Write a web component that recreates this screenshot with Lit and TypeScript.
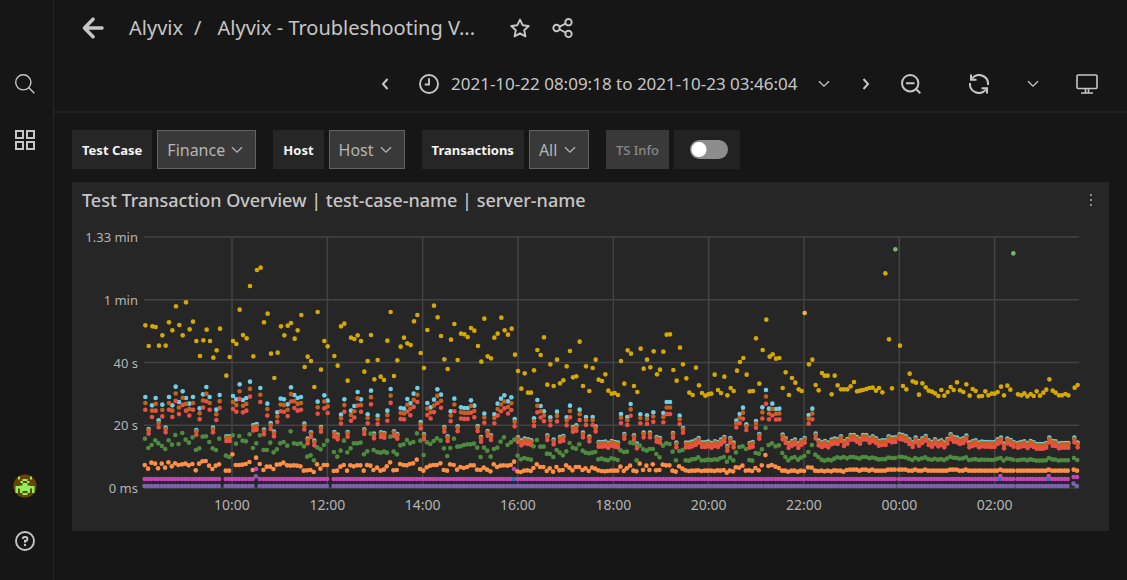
import { LitElement, html, svg, css } from "lit";
import { customElement, property } from "lit/decorators.js";

// Chart samples are kept as recorded blocks. Each block has its own origin, and
// all coordinates are in thirds of a plot pixel, with y growing downwards.
const UNIT = 3;
const PLOT_LEFT = 144;
const PLOT_WIDTH = 935;
const PLOT_BASE = 1463;
const PLOT_HEIGHT = 251;

interface Point { x: number; h: number; }
interface Dot extends Point { color: string; }

const nums = (s: string) => s.trim().split(/\s+/).map(Number);
const toX = (ox: number, x: number) => (ox * UNIT + x) / UNIT - PLOT_LEFT;
const toH = (oy: number, y: number) => PLOT_BASE - (oy * UNIT + y);

const TOTALS: [number, number, string][] = [
  [70, 220, `226 315 236 377 247 318 257 320 267 376 277 345 287 376 297 306 307 330 318 258 328 314 338 345
    348 246 359 327 369 304 379 362 390 407 400 360 410 328 420 362 430 412 440 390 450 325 469 466 479 410
    489 362 499 371 509 268 519 344 530 354 540 197 550 408 561 149 572 142 582 306 593 280 603 400 613 473
    623 397 633 318 643 345 653 316 663 308 674 355 683 330 694 284 704 440 713 409 723 422 733 500 743 275
    753 448 763 362 773 378`],
  [330, 280, `13 227 23 256 33 138 43 130 53 301 63 172 73 176 83 165 93 182 103 274 113 242 123 164 133 297
    143 239 152 289 162 299 172 181 182 95 192 287 202 240 212 199 222 172 232 189 242 194 252 123 262 104
    272 218 282 263 292 149 312 76 323 111 333 167 343 237 353 266 363 178 373 131 383 239 393 160 403 162
    413 170 423 143 433 151 444 197 454 244 463 115 473 228 483 234 493 172 503 160 514 112 524 150 534 163
    545 145 555 223 564 272 574 325 584 279 594 337 603 337 612 270 622 209 632 224 642 171 652 313 661 252
    671 317 681 238 690 309 700 300 710 258 720 212 729 291 739 288 749 184 759 317 768 258 778 332 788 263
    797 238`],
  [590, 280, `26 298 36 302 46 282 55 331 65 340 74 338 84 344 93 242 103 310 113 210 123 220 132 317 142 335
    152 205 161 265 171 238 181 261 191 213 201 282 210 268 220 214 230 163 240 162 250 269 260 301 270 202
    279 252 289 294 298 337 308 344 318 262 327 315 336 338 346 346 355 342 364 340 374 283 384 329 393 338
    403 289 412 345 422 323 431 332 441 271 450 245 460 233 470 283 479 333 489 332 498 174 508 310 518 209
    529 118 539 229 548 222 558 235 568 233 578 323 587 276 597 344 606 293 616 307 626 327 635 332 657 252
    667 238 677 314 686 330 696 278 704 286 713 286 725 342 734 286 743 315 753 327 762 327 772 327`],
  [850, 230, `2 468 12 455 21 483 30 481 39 479 49 476 58 473 68 472 78 481 87 473 97 486 106 129 117 327
    126 474 150 346 159 467 169 477 179 430 188 453 198 457 207 493 217 459 227 471 236 481 246 484 255 489
    265 497 274 479 283 496 293 485 302 470 311 479 321 456 330 480 340 485 349 462 359 496 368 476 377 482
    387 498 396 497 406 483 415 495 425 490 434 490 443 485 453 469 462 495 472 466 481 478 504 492 514 495
    523 489 532 498 542 491 551 497 560 483 570 496 580 487 589 478 598 447 608 481 617 487 627 495 636 495
    646 491 655 495 674 472 683 464`],
];

// x, slowest step, middle step, fast step
const STEPS: [number, number, string][] = [
  [70, 370, `226 80 205 284 236 176 233 295 246 105 224 277 257 83 210 280 266 150 219 294 277 103 227 280
    287 172 236 292 297 80 210 276 307 105 223 288 317 49 194 279 327 95 221 284 338 63 188 282
    348 83 208 280 358 100 217 285 369 80 201 281 379 179 239 300 389 114 234 280 399 72 199 273
    409 50 198 272 419 80 215 286 429 172 234 296 439 118 239 286 449 74 205 282 469 198 256 301
    479 198 260 301 489 77 195 252 499 87 220 284 509 42 197 284 519 89 211 283 529 83 213 281
    540 34 192 275 550 164 233 299 560 161 219 262 571 53 195 281 582 178 239 299 592 100 239 289
    602 158 217 289 612 184 246 296 622 126 237 283 632 85 219 282 642 87 215 277 653 102 226 285
    663 51 183 286 673 74 219 285 683 83 221 286 693 80 219 288 703 160 228 301 713 205 259 300
    723 186 255 299 733 211 270 305 743 94 231 282 753 170 237 295 763 75 224 284 773 91 211 284`],
  [330, 280, `13 455 515 572 23 463 529 571 33 403 511 559 43 357 481 554 53 455 516 571 63 391 504 555
    73 377 489 558 83 335 489 555 93 357 487 555 103 447 522 571 113 402 513 554 123 331 460 556
    132 460 509 569 143 406 515 562 153 456 517 571 163 458 514 568 172 391 517 558 182 326 469 546
    192 453 514 570 202 461 522 569 212 383 495 551 222 385 492 554 232 356 479 555 241 369 489 551
    251 340 485 549 262 323 459 538 272 425 481 566 282 462 524 571 292 368 486 561 302 381 491 556
    312 358 482 554 322 327 474 554 333 343 481 549 343 440 504 569 353 468 527 571 362 393 503 552
    373 355 475 554 383 438 499 568 393 381 498 560 403 383 494 563 413 383 492 560 423 360 492 555
    433 376 490 555 443 437 502 568 453 470 530 569 463 400 502 562 473 452 511 568 483 465 529 573
    493 402 506 552 503 370 502 560 513 355 484 556 523 345 471 555 534 363 494 556 544 351 486 554
    554 416 478 544 564 471 526 573 574 481 537 575 584 475 533 571 594 477 536 570 604 480 538 572
    612 414 498 563 622 359 479 552 632 377 499 560 642 393 499 560 652 465 520 572 661 411 521 564
    671 478 530 574 681 394 509 560 690 470 517 570 700 467 525 569 710 411 513 555 720 376 488 562
    729 440 502 570 739 435 505 560 749 388 492 560 759 457 511 569 768 410 517 564 778 469 519 572
    788 410 517 562 797 439 515 565`],
  [590, 280, `26 485 537 570 36 485 535 572 46 484 538 573 55 488 540 572 65 482 534 571 75 485 536 571
    84 487 539 571 93 401 510 559 103 461 515 572 112 410 514 564 122 371 487 556 132 465 489 571
    141 490 540 573 151 402 496 550 161 457 507 569 171 405 511 556 180 457 506 569 190 396 506 552
    200 470 521 570 210 473 531 569 220 398 496 553 230 365 489 555 240 365 491 555 249 458 514 571
    259 487 540 574 269 406 512 558 279 443 509 565 288 487 540 570 298 487 541 572 307 484 537 571
    317 480 536 571 326 473 531 570 336 486 540 572 346 486 540 571 355 484 538 571 365 488 539 571
    375 483 537 572 384 486 538 570 393 478 533 571 403 470 530 569 412 497 544 577 421 473 532 571
    431 487 540 573 439 421 516 561 449 401 500 562 459 382 498 556 469 432 506 571 479 488 539 570
    488 485 541 572 498 422 518 563 508 461 520 570 517 381 507 555 528 329 443 524 537 385 494 557
    547 370 489 554 558 386 498 559 568 385 495 563 578 463 518 571 587 474 530 571 596 489 540 574
    606 482 533 571 615 478 530 571 625 489 538 574 634 480 532 571 644 473 527 572 656 404 515 561
    667 385 494 562 677 460 523 571 686 481 530 572 696 486 538 571 705 482 541 573 715 487 538 571
    725 478 540 573 734 475 535 570 743 477 531 571 753 468 533 571 762 483 530 574 772 476 534 569`],
];

// x and slowest step only; the other steps follow it closely after midnight
const QUIET = `2 614 12 614 21 620 30 626 39 614 49 614 59 623 68 618 78 624 87 632 97 630 107 630 116 618
  126 622 136 621 149 612 158 614 168 618 178 627 188 636 197 622 207 632 217 624 227 617 236 630 246 635
  255 627 265 634 274 630 283 637 292 626 302 612 311 620 321 622 330 627 340 624 349 616 358 637 368 633
  377 630 387 637 396 634 406 635 415 635 425 636 434 635 443 627 453 622 462 640 472 625 482 629 491 635
  504 638 513 635 523 633 533 639 542 632 551 636 560 641 570 641 579 641 589 638 598 622 608 632 617 633
  627 640 636 638 646 638 655 638 673 622 683 637`;

const C = {
  yellow: "#d6a800", cyan: "#6ed0e8", rust: "#c4611a", red: "#ea5045",
  green: "#4f8b3f", orange: "#ff8f45", magenta: "#c345b4", purple: "#7a62ae",
  blue: "#1f78c1", lime: "#7eb26d", amber: "#eab839",
};

function buildDots(): Dot[] {
  const back: Dot[] = [];
  const cyan: Dot[] = [], rust: Dot[] = [], red: Dot[] = [];
  const green: Dot[] = [], orange: Dot[] = [], low: Dot[] = [];

  const add = (x: number, hc: number, hg: number, ho: number) => {
    const rise = Math.max(0, Math.min(1, (hc - 182) / 65));
    const extra = Math.max(0, hc - 249) * 0.1;
    cyan.push({ x, h: hc, color: C.cyan });
    rust.push({ x, h: hc - 4 - 12 * rise - extra * 0.8, color: C.rust });
    red.push({ x, h: hc - 14 - 21 * rise - extra * 1.4, color: C.red });
    green.push({ x: x - 0.4, h: hg, color: C.green });
    orange.push({ x: x - 0.6, h: ho, color: C.orange });
    const spike = (ho > 88 && Math.abs(x - 112) < 2) || Math.abs(x - 370.7) < 1;
    const late = Math.abs(x - 856.7) < 1.5 || Math.abs(x - 905) < 1;
    if (Math.abs(x - 370.7) < 1 || late) low.push({ x: x - 0.6, h: 27, color: C.blue });
    low.push({ x: x - 0.6, h: spike ? 57 : late ? 36 : x > 928 ? 33 : 27, color: C.magenta });
    low.push({ x: x - 0.8, h: spike && x < 200 ? 35 : x > 928 && x < 931 ? 13 : 6, color: C.purple });
  };

  for (const [ox, oy, text] of TOTALS) {
    const n = nums(text);
    for (let i = 0; i < n.length; i += 2) back.push({ x: toX(ox, n[i]), h: toH(oy, n[i + 1]), color: C.yellow });
  }
  back.push({ x: toX(590, 644), h: toH(280, 98), color: C.amber });
  back.push({ x: toX(850, 136), h: toH(230, 57), color: C.lime });
  back.push({ x: toX(850, 490), h: toH(230, 69), color: C.lime });

  for (const [ox, oy, text] of STEPS) {
    const n = nums(text);
    for (let i = 0; i < n.length; i += 4) {
      add(toX(ox, n[i]), toH(oy, n[i + 1]), toH(oy, n[i + 2]), toH(oy, n[i + 3]));
    }
  }
  const q = nums(QUIET);
  for (let i = 0; i < q.length; i += 2) {
    const h = toH(230, q[i + 1]);
    add(toX(850, q[i]), h, 93 - (159 - h) * 0.4, h > 150 ? 55 : 52);
  }
  return [...back, ...cyan, ...rust, ...red, ...green, ...orange, ...low];
}

const DOTS = buildDots();
const TIMES = ["10:00", "12:00", "14:00", "16:00", "18:00", "20:00", "22:00", "00:00", "02:00"];
const LEVELS = ["1.33 min", "1 min", "40 s", "20 s", "0 ms"];
const pct = (x: number) => `${((x / PLOT_WIDTH) * 100).toFixed(3)}%`;

@customElement("transaction-chart")
export class TransactionChart extends LitElement {
  static styles = css`
    :host { display: grid; grid-template-columns: 66px 1fr; column-gap: 6px; padding-right: 30px; color: #b4b4b4; font-size: 13px; line-height: 16px; }
    .levels { display: flex; flex-direction: column; justify-content: space-between; text-align: right; margin: -8px 0; height: 267px; white-space: nowrap; }
    .plot { display: block; width: 100%; height: 251px; overflow: visible; }
    .times { grid-column: 2; display: block; width: 100%; height: 34px; overflow: visible; }
    .times text { fill: #b4b4b4; text-anchor: middle; font-size: 14px; }
    .grid { stroke: #434343; stroke-width: 1.5; }
  `;

  render() {
    const tick = (i: number) => pct(88 + i * 95.33);
    return html`
      <div class="levels">${LEVELS.map((l) => html`<span>${l}</span>`)}</div>
      <svg class="plot" role="img" aria-label="Transaction durations over time">
        ${LEVELS.map((_, i) => svg`<line class="grid" x1="0" x2="100%" y1=${i * 62.75} y2=${i * 62.75} />`)}
        ${TIMES.map((_, i) => svg`<line class="grid" x1=${tick(i)} x2=${tick(i)} y1="0" y2="251" />`)}
        ${DOTS.map((d) => svg`<circle cx=${pct(d.x)} cy=${(PLOT_HEIGHT - d.h / UNIT).toFixed(2)} r="2.3" fill=${d.color} />`)}
      </svg>
      <svg class="times">
        ${TIMES.map((t, i) => svg`<text x=${tick(i)} y="22">${t}</text>`)}
      </svg>`;
  }
}

const chevron = html`<svg class="chev" width="12" height="8" viewBox="0 0 12 8" aria-hidden="true"><path d="M1 1.2 6 6.2 11 1.2" fill="none" stroke="currentColor" stroke-width="1.3"/></svg>`;

@customElement("variable-picker")
export class VariablePicker extends LitElement {
  @property() label = "";
  @property() value = "";

  static styles = css`
    :host { display: flex; gap: 5px; }
    label { display: flex; align-items: center; padding: 0 10px; background: #262626; color: #f4f4f4; font-size: 13px; font-weight: 700; height: 39px; }
    .box { display: grid; align-items: center; justify-items: end; background: #393939; border: 1px solid #626262; color: #b4b4b4; height: 37px; }
    select { grid-area: 1 / 1; appearance: none; border: 0; margin: 0; height: 37px; padding: 0 30px 0 9px; background: transparent; color: inherit; font: inherit; font-size: 16px; outline-offset: -2px; }
    .chev { grid-area: 1 / 1; margin-right: 12px; pointer-events: none; }
  `;

  render() {
    return html`
      <label for="pick">${this.label}</label>
      <div class="box"><select id="pick"><option>${this.value}</option></select>${chevron}</div>`;
  }
}

@customElement("app-root")
export class AppRoot extends LitElement {
  static styles = css`
    :host { display: grid; grid-template-columns: 54px minmax(0, 1fr); min-height: 100vh; background: #161616; color: #c6c6c6; font-family: "Noto Sans", "Open Sans", sans-serif; }
    * { box-sizing: border-box; }
    button { display: flex; align-items: center; justify-content: center; padding: 0; border: 0; background: none; color: inherit; font: inherit; cursor: pointer; }
    svg { display: block; flex: none; }
    a { color: inherit; text-decoration: none; }
    nav { display: flex; flex-direction: column; align-items: center; gap: 36px; padding: 74px 3px 29px 0; border-right: 1px solid #242424; }
    .low { margin-top: auto; display: flex; flex-direction: column; align-items: center; gap: 33px; }
    header { border-bottom: 2px solid #1e1e1e; }
    .title { display: flex; align-items: center; height: 56px; padding-left: 28px; font-size: 20px; line-height: 28px; }
    h1 { margin: 0; font: inherit; display: flex; min-width: 0; white-space: nowrap; }
    .crumb { margin-left: 25px; }
    .slash { margin: 0 16px 0 11px; }
    .star { margin-left: 35px; }
    .share { margin-left: 22px; }
    .tools { display: flex; align-items: center; justify-content: flex-end; height: 55px; padding-right: 29px; }
    .range { gap: 12px; margin: 0 32px 0 30px; font-size: 17px; }
    .when { min-width: 352px; text-align: left; white-space: nowrap; margin-right: 3px; }
    .out { margin-left: 31px; }
    .sync { margin-left: 48px; }
    .every { margin-left: 38px; }
    .tv { margin-left: 37px; }
    .body { padding: 17px 18px 49px; }
    .vars { display: flex; flex-wrap: wrap; gap: 17px; margin-bottom: 13px; }
    .info { display: flex; gap: 5px; }
    .info label { display: flex; align-items: center; padding: 0 10px; background: #393939; color: #8a8a8a; font-size: 13px; font-weight: 500; height: 39px; }
    .cell { display: flex; align-items: center; justify-content: center; width: 66px; height: 39px; background: #222222; }
    .cell input { appearance: none; margin: 0 0 0 4px; width: 38px; height: 19px; border-radius: 10px; background: radial-gradient(circle at 9px 50%, #ffffff 7px, transparent 8px) #8d8d8d; }
    .panel { background: #262626; padding: 6px 0 9px; }
    .head { display: flex; justify-content: space-between; align-items: center; padding: 0 13px 0 10px; margin-bottom: 25px; }
    h2 { margin: 0; font-size: 18px; line-height: 24px; font-weight: 500; }
  `;

  render() {
    return html`
      <nav aria-label="Main">
        <button aria-label="Search"><svg width="20" height="20" viewBox="0 0 20 20"><g fill="none" stroke="currentColor" stroke-width="1.4"><circle cx="8.3" cy="8.3" r="7.6"/><path d="m13.8 13.8 5.5 5.5"/></g></svg></button>
        <button aria-label="Dashboards"><svg width="20" height="20" viewBox="0 0 20 20"><path d="M1 1h7v7H1zM12 1h7v7h-7zM1 12h7v7H1zM12 12h7v7h-7z" fill="none" stroke="currentColor" stroke-width="2"/></svg></button>
        <div class="low">
          <button aria-label="Profile"><svg width="24" height="24" viewBox="0 0 24 24"><circle cx="12" cy="12" r="11.6" fill="#6b4300"/><path fill="#8ff05c" d="M5 2.5h2v3H5zM17 2.5h2v3h-2zM9.5 5h5v2h-5zM7.5 7h2.5v2H7.5zM14 7h2.5v2H14zM9.5 9h5v2.5H17V12h4.500v7H19v-4.500h-2V19h-2.500v-2h-5v2H7v-4.500H5V19H2.500v-7H7v-.5h2.500zM9.500 19h5v2h-5z"/></svg></button>
          <button aria-label="Help"><svg width="20" height="20" viewBox="0 0 20 20"><g fill="none" stroke="currentColor" stroke-width="1.9"><circle cx="10" cy="10" r="9"/><path d="M7.8 8V7.6A1.7 1.7 0 0 1 9.5 6h1a1.900 1.900 0 0 1 0 3.800H10v2"/></g><circle cx="10" cy="14" r="1.2" fill="currentColor"/></svg></button>
        </div>
      </nav>
      <main>
        <header>
          <div class="title">
            <button aria-label="Back"><svg width="22" height="22" viewBox="0 0 22 22"><path d="M11 2.200 2.500 11l8.500 8.800M3 11h17" fill="none" stroke="currentColor" stroke-width="3.500" stroke-linecap="round" stroke-linejoin="round"/></svg></button>
            <h1><a class="crumb" href="#">Alyvix</a><span class="slash">/</span><a href="#">Alyvix - Troubleshooting V...</a></h1>
            <button class="star" aria-label="Favourite"><svg width="20" height="20" viewBox="0 0 20 20"><path d="m10 1.600 2.600 5.600 6.100.8-4.500 4.200 1.200 6.100L10 15.300l-5.400 3 1.200-6.100L1.300 8l6.100-.8z" fill="none" stroke="currentColor" stroke-width="1.9" stroke-linejoin="round"/></svg></button>
            <button class="share" aria-label="Share"><svg width="21" height="20" viewBox="0 0 21 20"><g fill="none" stroke="currentColor" stroke-width="1.9"><circle cx="4.500" cy="10" r="3.200"/><circle cx="16.500" cy="4.200" r="3.200"/><circle cx="16.500" cy="15.900" r="3.200"/><path d="m7.600 8.600 6-3M7.600 11.500l6 3"/></g></svg></button>
          </div>
          <div class="tools">
            <button aria-label="Earlier"><svg width="8" height="12" viewBox="0 0 8 12"><path d="M6.500 1 2 6l4.500 5" fill="none" stroke="currentColor" stroke-width="2"/></svg></button>
            <button class="range">
              <svg width="20" height="20" viewBox="0 0 20 20"><g fill="none" stroke="currentColor" stroke-width="1.9"><circle cx="10" cy="10" r="9"/><path d="M10 4.200V10.500H5.800"/></g></svg>
              <span class="when">2021-10-22 08:09:18 to 2021-10-23 03:46:04</span>
              ${chevron}
            </button>
            <button aria-label="Later"><svg width="8" height="12" viewBox="0 0 8 12"><path d="M1.500 1 6 6l-4.500 5" fill="none" stroke="currentColor" stroke-width="2"/></svg></button>
            <button class="out" aria-label="Zoom out"><svg width="20" height="20" viewBox="0 0 20 20"><path d="M5 9.200h8.500M15.300 15.300l4 4" stroke="currentColor" stroke-width="2"/><circle cx="9.200" cy="9.200" r="8.200" fill="none" stroke="currentColor" stroke-width="2"/></svg></button>
            <button class="sync" aria-label="Refresh"><svg width="20" height="20" viewBox="0 0 20 20"><g fill="none" stroke="currentColor" stroke-width="2"><path d="M19 11A9 9 0 0 0 3 4.500M1 9a9 9 0 0 0 16 6.500"/><path d="M2 .5v5.300h5.500M18 19.500v-5.300h-5.500"/></g></svg></button>
            <button class="every" aria-label="Refresh interval">${chevron}</button>
            <button class="tv" aria-label="Kiosk mode"><svg width="22" height="20" viewBox="0 0 22 20"><g fill="none" stroke="currentColor" stroke-width="1.600"><rect x="1" y="1" width="20" height="13.500" rx="1"/><path d="M9.500 14.500V19M12.500 14.500V19M5 19h12"/></g></svg></button>
          </div>
        </header>
        <div class="body">
          <div class="vars">
            <variable-picker label="Test Case" value="Finance"></variable-picker>
            <variable-picker label="Host" value="Host"></variable-picker>
            <variable-picker label="Transactions" value="All"></variable-picker>
            <div class="info"><label for="ts">TS Info</label><div class="cell"><input id="ts" type="checkbox" role="switch" /></div></div>
          </div>
          <section class="panel">
            <div class="head">
              <h2>Test Transaction Overview | test-case-name | server-name</h2>
              <button aria-label="Panel menu"><svg width="10" height="14" viewBox="0 0 10 14"><path d="M4 1h2v2H4zM4 6h2v2H4zM4 11h2v2H4z" fill="#8d8d8d"/></svg></button>
            </div>
            <transaction-chart></transaction-chart>
          </section>
        </div>
      </main>`;
  }
}
